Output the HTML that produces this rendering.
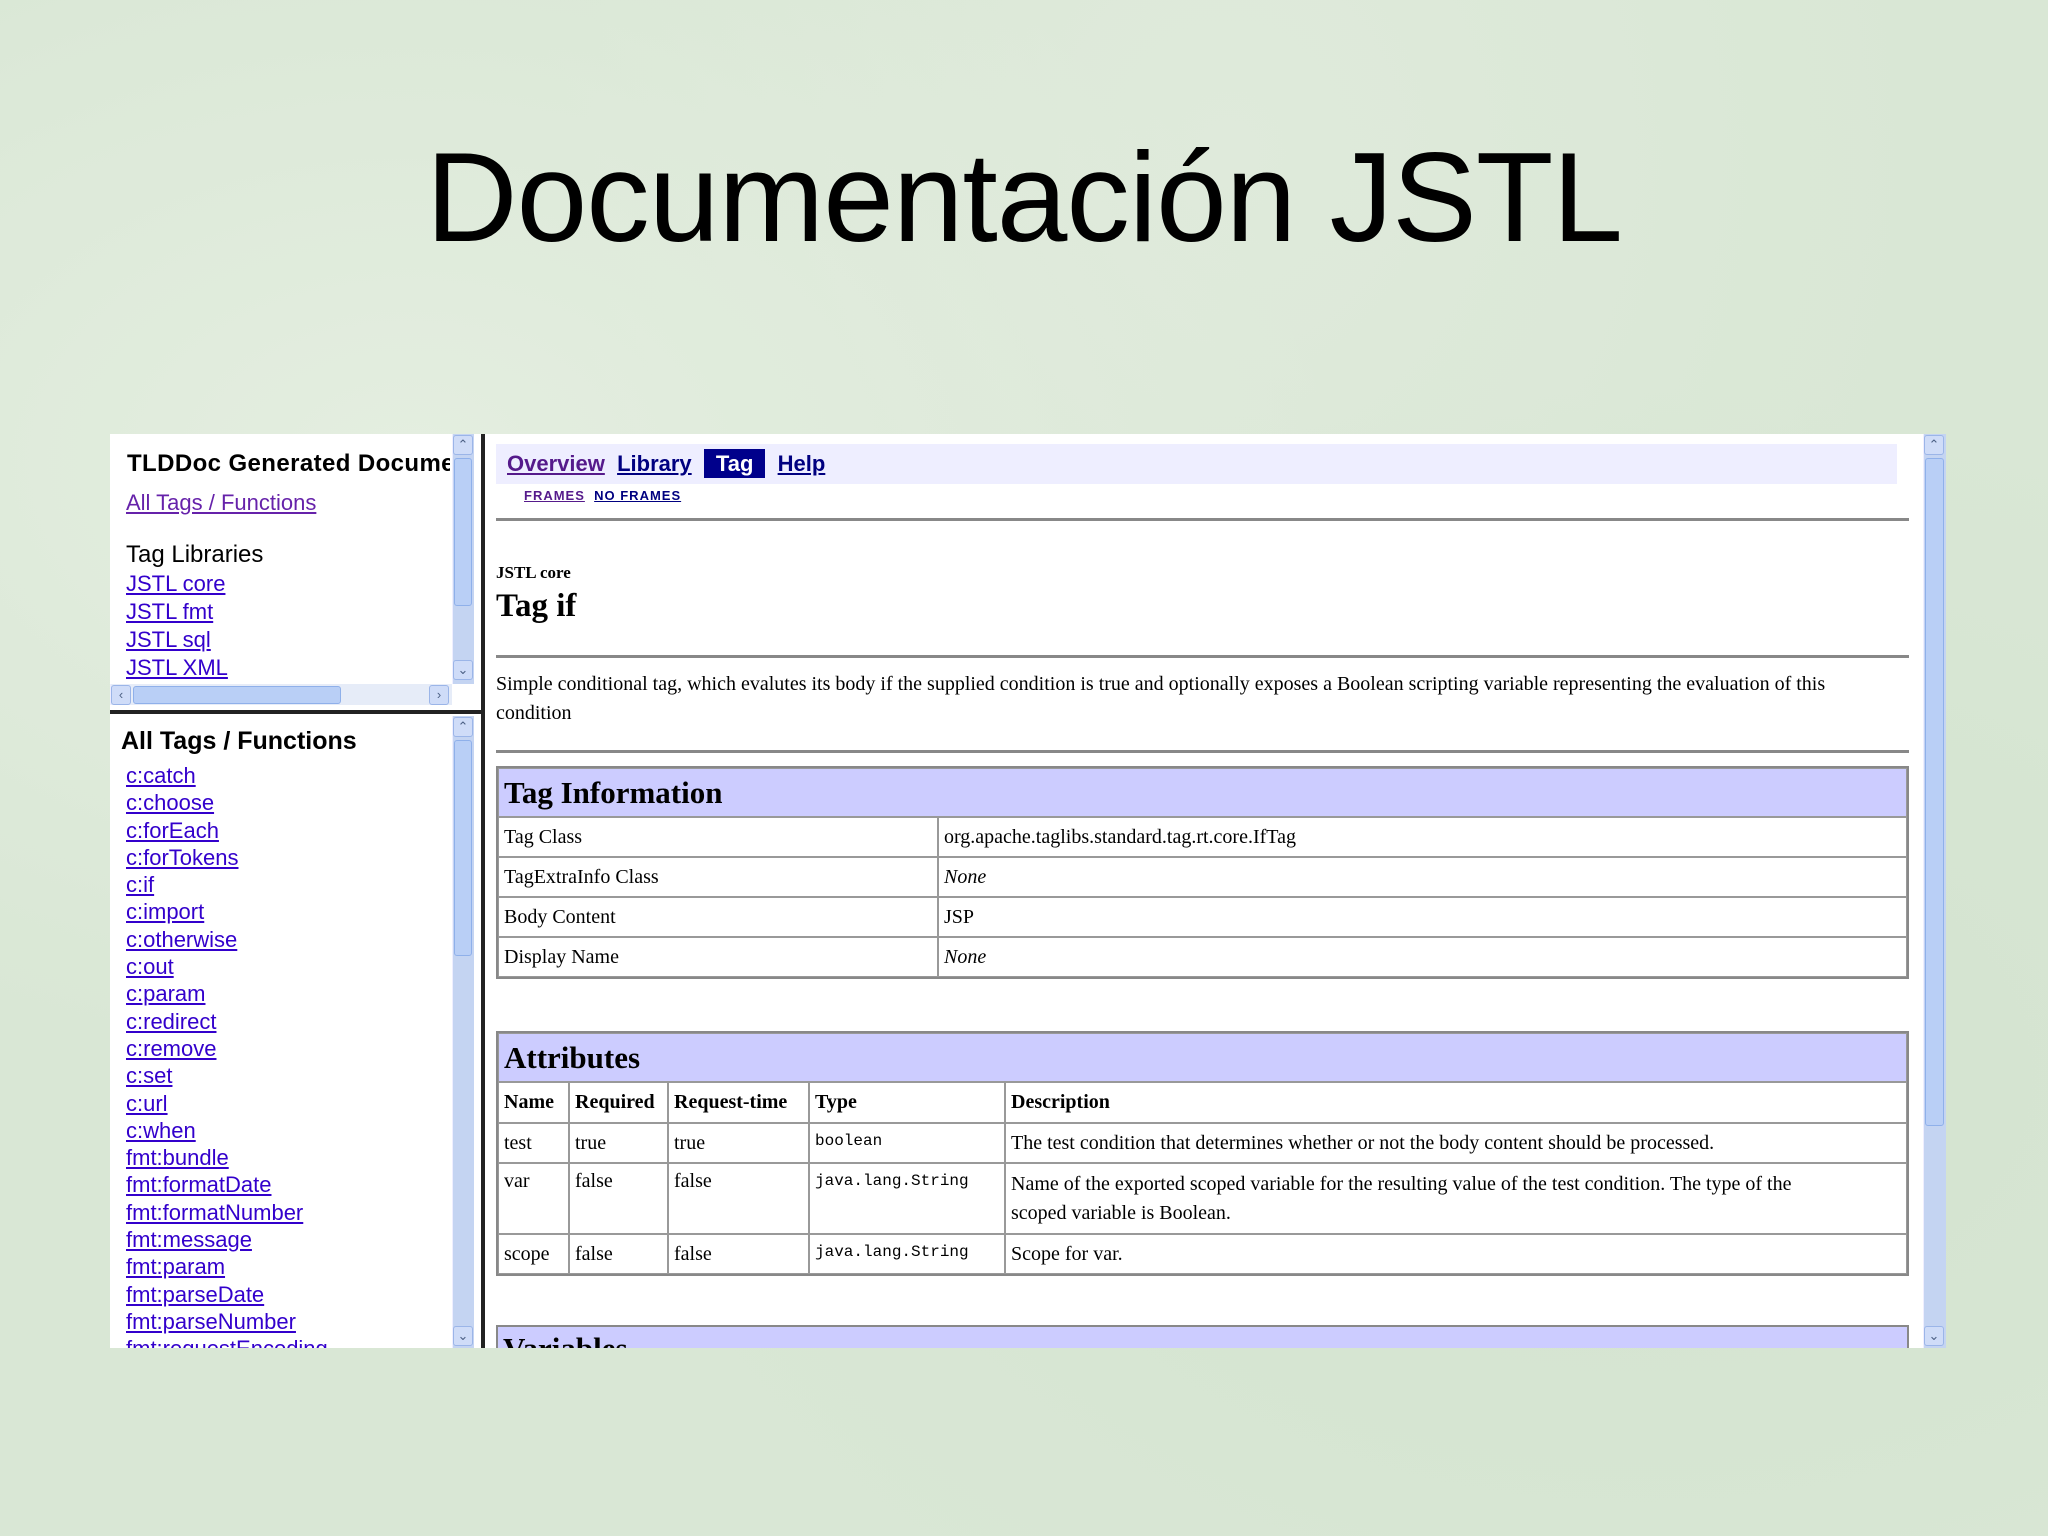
<!DOCTYPE html>
<html><head><meta charset="utf-8"><style>
*{margin:0;padding:0;box-sizing:border-box}
body{width:2048px;height:1536px;overflow:hidden;position:relative;font-family:"Liberation Sans",sans-serif;
background:radial-gradient(ellipse at 20% 30%,#e4eee0 0,transparent 40%),radial-gradient(ellipse at 80% 70%,#d3e3cf 0,transparent 45%),radial-gradient(ellipse at 60% 10%,#dfeadb 0,transparent 40%),#d9e7d5}
.abs{position:absolute}
h1{position:absolute;left:0;width:2048px;top:124px;text-align:center;font-weight:normal;font-size:127px;color:#000;letter-spacing:-1px}
a{color:#3300cc;text-decoration:underline}
.lt{position:absolute;font-size:22px;white-space:nowrap}
.sb{position:absolute;background:#c4d4f2;border-left:1px solid #eef;}
.thumb{position:absolute;background:#b9cff6;border:1px solid #8fb0ea;border-radius:3px}
.arr{position:absolute;width:20px;height:20px;background:#cfdcf8;border:1px solid #9bb5e8;border-radius:3px;font-size:13px;text-align:center;line-height:18px;color:#4d6185}
.serif{font-family:"Liberation Serif",serif}
table{border-collapse:separate;border-spacing:0;position:absolute;left:496px;width:1413px;border:2px solid #888;font-family:"Liberation Serif",serif;font-size:20px}
td,th{border:1px solid #999;padding:0 5px;text-align:left;vertical-align:middle}
th.h{background:#ccccff;font-size:31px;font-weight:bold;height:49px}
.mono{font-family:"Liberation Mono",monospace;font-size:16px;vertical-align:top;padding-top:8px}
hr{position:absolute;left:496px;width:1413px;height:0;border:0;border-top:3px solid #888}
</style></head><body>
<h1>Documentación JSTL</h1>

<div class="abs" style="left:110px;top:434px;width:1836px;height:914px;background:#fff"></div>
<!-- left top frame -->
<div class="lt" style="left:127px;top:450px;font-weight:bold;font-size:24px;width:323px;overflow:hidden;letter-spacing:0.4px">TLDDoc Generated Documentation</div>
<div class="lt" style="left:126px;top:490px"><a style="color:#6622aa">All Tags / Functions</a></div>
<div class="lt" style="left:126px;top:541px;font-size:24px">Tag Libraries</div>
<div class="lt" style="left:126px;top:571px"><a>JSTL core</a></div>
<div class="lt" style="left:126px;top:599px"><a>JSTL fmt</a></div>
<div class="lt" style="left:126px;top:627px"><a>JSTL sql</a></div>
<div class="lt" style="left:126px;top:655px"><a>JSTL XML</a></div>
<div class="sb" style="left:452px;top:434px;width:22px;height:250px"></div>
<div class="arr" style="left:453px;top:435px">&#8963;</div>
<div class="thumb" style="left:454px;top:458px;width:18px;height:148px"></div>
<div class="arr" style="left:453px;top:660px">&#8964;</div>
<div class="sb" style="left:110px;top:684px;width:342px;height:21px;background:#e6ecf8"></div>
<div class="arr" style="left:111px;top:685px">&#8249;</div>
<div class="thumb" style="left:133px;top:686px;width:208px;height:18px"></div>
<div class="arr" style="left:429px;top:685px">&#8250;</div>
<div class="abs" style="left:110px;top:710px;width:372px;height:4px;background:#222"></div>
<div class="abs" style="left:481px;top:434px;width:4px;height:914px;background:#222"></div>
<!-- left bottom -->
<div class="lt" style="left:121px;top:727px;font-weight:bold;font-size:25px">All Tags / Functions</div>
<div class="abs" style="left:126px;top:762px;font-size:22px;line-height:27.3px">
<a>c:catch</a><br><a>c:choose</a><br><a>c:forEach</a><br><a>c:forTokens</a><br><a>c:if</a><br><a>c:import</a><br><a>c:otherwise</a><br><a>c:out</a><br><a>c:param</a><br><a>c:redirect</a><br><a>c:remove</a><br><a>c:set</a><br><a>c:url</a><br><a>c:when</a><br><a>fmt:bundle</a><br><a>fmt:formatDate</a><br><a>fmt:formatNumber</a><br><a>fmt:message</a><br><a>fmt:param</a><br><a>fmt:parseDate</a><br><a>fmt:parseNumber</a><br><a>fmt:requestEncoding</a></div>
<div class="abs" style="left:110px;top:1348px;width:372px;height:20px;background:#d9e7d5"></div>
<div class="sb" style="left:452px;top:716px;width:22px;height:632px"></div>
<div class="arr" style="left:453px;top:717px">&#8963;</div>
<div class="thumb" style="left:454px;top:740px;width:18px;height:216px"></div>
<div class="arr" style="left:453px;top:1326px">&#8964;</div>

<!-- right -->
<div class="abs" style="left:496px;top:444px;width:1401px;height:40px;background:#eeeeff"></div>
<div class="abs" style="left:507px;top:451px;font-size:22px;font-weight:bold;white-space:nowrap">
<a style="color:#551a8b">Overview</a>&nbsp;&nbsp;<a style="color:#000080">Library</a>&nbsp;&nbsp;<span style="background:#00008b;color:#fff;padding:2px 12px">Tag</span>&nbsp;&nbsp;<a style="color:#000080">Help</a></div>
<div class="abs" style="left:524px;top:488px;font-size:13px;font-weight:bold;letter-spacing:1px"><a style="color:#551a8b">FRAMES</a>&nbsp;&nbsp;<a style="color:#000080">NO FRAMES</a></div>
<hr style="top:518px">
<div class="abs serif" style="left:496px;top:563px;font-size:17px;font-weight:bold">JSTL core</div>
<div class="abs serif" style="left:496px;top:588px;font-size:33px;font-weight:bold">Tag if</div>
<hr style="top:655px">
<div class="abs serif" style="left:496px;top:670px;width:1410px;font-size:20px;line-height:29px">Simple conditional tag, which evalutes its body if the supplied condition is true and optionally exposes a Boolean scripting variable representing the evaluation of this<br>condition</div>
<hr style="top:750px">

<table style="top:766px">
<tr><th class="h" colspan="2">Tag Information</th></tr>
<tr style="height:40px"><td style="width:440px">Tag Class</td><td>org.apache.taglibs.standard.tag.rt.core.IfTag</td></tr>
<tr style="height:40px"><td>TagExtraInfo Class</td><td><i>None</i></td></tr>
<tr style="height:40px"><td>Body Content</td><td>JSP</td></tr>
<tr style="height:40px"><td>Display Name</td><td><i>None</i></td></tr>
</table>

<table style="top:1031px">
<tr><th class="h" colspan="5">Attributes</th></tr>
<tr style="height:41px"><th style="width:71px">Name</th><th style="width:99px">Required</th><th style="width:141px">Request-time</th><th style="width:196px">Type</th><th>Description</th></tr>
<tr style="height:40px"><td>test</td><td>true</td><td>true</td><td class="mono">boolean</td><td>The test condition that determines whether or not the body content should be processed.</td></tr>
<tr style="height:71px"><td style="vertical-align:top;padding-top:6px">var</td><td style="vertical-align:top;padding-top:6px">false</td><td style="vertical-align:top;padding-top:6px">false</td><td class="mono">java.lang.String</td><td style="line-height:29px">Name of the exported scoped variable for the resulting value of the test condition. The type of the<br>scoped variable is Boolean.</td></tr>
<tr style="height:40px"><td>scope</td><td>false</td><td>false</td><td class="mono">java.lang.String</td><td>Scope for var.</td></tr>
</table>

<div class="abs" style="left:496px;top:1325px;width:1413px;height:23px;background:#ccccff;border:2px solid #888;border-bottom:0;overflow:hidden"><div class="serif" style="font-size:31px;font-weight:bold;padding:4px 5px">Variables</div></div>

<div class="sb" style="left:1923px;top:434px;width:23px;height:914px"></div>
<div class="arr" style="left:1924px;top:435px">&#8963;</div>
<div class="thumb" style="left:1925px;top:458px;width:19px;height:668px"></div>
<div class="arr" style="left:1924px;top:1326px">&#8964;</div>
</body></html>
